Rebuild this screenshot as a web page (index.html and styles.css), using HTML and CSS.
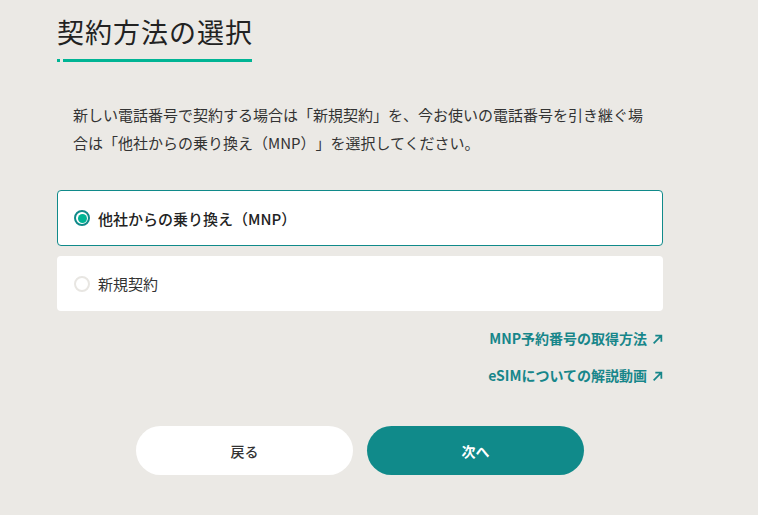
FILE: index.html
```html
<!DOCTYPE html>
<html lang="ja">
<head>
<meta charset="utf-8">
<link rel="stylesheet" href="styles.css">
</head>
<body>
<main class="page">
  <h1 class="title">契約方法の選択</h1>
  <div class="rule"><span class="dot"></span><span class="bar"></span></div>
  <p class="lead">新しい電話番号で契約する場合は「新規契約」を、今お使いの電話番号を引き継ぐ場合は「他社からの乗り換え（MNP）」を選択してください。</p>
  <div class="options">
    <label class="option selected"><span class="radio on"></span><span class="opt-text">他社からの乗り換え（MNP）</span></label>
    <label class="option"><span class="radio"></span><span class="opt-text">新規契約</span></label>
  </div>
  <div class="links">
    <a class="link">MNP予約番号の取得方法<svg class="arrow" viewBox="0 0 10 10" width="11" height="11"><path d="M1.5 8.5 L8.5 1.5 M3 1.5 H8.5 V7" fill="none" stroke="currentColor" stroke-width="1.6"/></svg></a>
    <a class="link">eSIMについての解説動画<svg class="arrow" viewBox="0 0 10 10" width="11" height="11"><path d="M1.5 8.5 L8.5 1.5 M3 1.5 H8.5 V7" fill="none" stroke="currentColor" stroke-width="1.6"/></svg></a>
  </div>
  <div class="actions">
    <button class="btn back">戻る</button>
    <button class="btn next">次へ</button>
  </div>
</main>
</body>
</html>
```
FILE: styles.css
```css
* { box-sizing: border-box; }
html, body { margin: 0; padding: 0; }
body {
  background: #ebe9e5;
  font-family: "Noto Sans CJK JP", "Noto Sans", sans-serif;
  color: #333;
  width: 758px;
  height: 515px;
  overflow: hidden;
  text-spacing-trim: space-all;
}
.page {
  width: 606px;
  margin-left: 57px;
  padding-top: 12px;
}
.title {
  margin: 0;
  font-size: 27px;
  font-weight: 400;
  color: #222;
  line-height: 40px;
  letter-spacing: 1px;
}
.rule {
  display: flex;
  align-items: center;
  gap: 3px;
  margin-top: 7px;
  height: 3px;
}
.dot { width: 3px; height: 3px; background: #00b494; }
.bar { width: 189px; height: 3px; background: #00b494; }
.lead {
  margin: 39px 0 0;
  padding: 0 16px;
  font-size: 15px;
  line-height: 28px;
  color: #333;
}
.options {
  margin-top: 33px;
  display: flex;
  flex-direction: column;
  gap: 10px;
}
.option {
  display: flex;
  align-items: center;
  gap: 8px;
  height: 55px;
  background: #fff;
  border-radius: 4px;
  padding: 0 17px;
  font-size: 15px;
  color: #333;
}
.option.selected {
  border: 1px solid #108a8a;
  height: 56px;
  padding: 0 16px;
  font-weight: 500;
  color: #222;
}
.radio {
  width: 16px;
  height: 16px;
  border-radius: 50%;
  border: 2px solid #e8e6e2;
  flex: none;
  position: relative;
}
.radio.on {
  border: 2px solid #108a8a;
}
.radio.on::after {
  content: "";
  position: absolute;
  left: 1.5px; top: 1.5px;
  width: 9px; height: 9px;
  border-radius: 50%;
  background: #00b494;
}
.links {
  margin-top: 16px;
  display: flex;
  flex-direction: column;
  align-items: flex-end;
  gap: 14px;
}
.link {
  display: flex;
  align-items: center;
  gap: 5px;
  font-size: 14px;
  font-weight: 700;
  color: #17868a;
  line-height: 23px;
}
.arrow { margin-top: 1px; }
.actions {
  margin-top: 39px;
  display: flex;
  justify-content: center;
  gap: 14px;
}
.btn {
  width: 217px;
  height: 49px;
  border-radius: 25px;
  border: none;
  font-family: inherit;
  font-size: 14px;
  font-weight: 700;
}
.back { background: #fff; color: #333; font-weight: 500; }
.next { background: #108a8a; color: #fff; }
```
